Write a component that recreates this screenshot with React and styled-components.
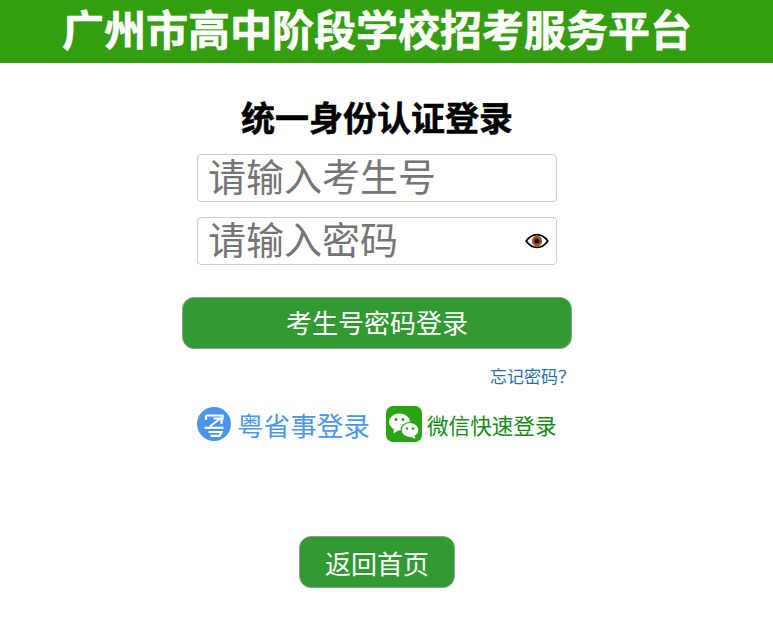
import React from "react";
import styled, { createGlobalStyle } from "styled-components";

const Global = createGlobalStyle`
  html, body { margin: 0; padding: 0; background: #fff; }
  body { font-family: "Liberation Sans", "Noto Sans CJK SC", sans-serif; }
  * { box-sizing: border-box; }
  input::placeholder { color: #757575; opacity: 1; }
`;
const Page = styled.div`
  width: 773px;
  height: 624px;
  overflow: hidden;
`;
const Header = styled.header`
  height: 63px;
  background: #339e0f;
  padding-right: 19px;
  display: flex;
  align-items: center;
  justify-content: center;
`;
const HeaderTitle = styled.h1`
  margin: 0;
  color: #fff;
  font-size: 42px;
  line-height: 63px;
  font-weight: 700;
  white-space: nowrap;
  -webkit-text-stroke: 0.6px #fff;
`;
const Main = styled.main`
  width: 754px;
  display: flex;
  flex-direction: column;
  align-items: center;
`;
const Subtitle = styled.h2`
  margin: 31px 0 0;
  font-size: 34px;
  line-height: 50px;
  font-weight: 700;
  color: #000;
  -webkit-text-stroke: 0.5px #000;
`;
const Form = styled.form`
  width: 390px;
  display: flex;
  flex-direction: column;
  align-items: center;
`;
const Field = styled.div`
  position: relative;
  width: 360px;
  height: 48px;
  margin-top: ${(p) => p.$top}px;
`;
const Input = styled.input`
  width: 100%;
  height: 100%;
  padding: 0 10px;
  border: 1px solid #ccc;
  border-radius: 4px;
  outline: none;
  background: #fff;
  font-family: inherit;
  font-size: 38px;
`;
const Eye = styled.svg`
  position: absolute;
  right: 8px;
  top: 15px;
  width: 24px;
  height: 18px;
`;
const GreenButton = styled.button`
  display: block;
  width: ${(p) => p.$w}px;
  height: 52px;
  padding: 0 0 ${(p) => p.$lift || 0}px;
  border: 1px solid #8fa08f;
  border-radius: 12px;
  background: #339933;
  color: #fff;
  font-family: inherit;
  font-size: 26px;
`;
const SubmitButton = styled(GreenButton)`
  margin-top: 32px;
`;
const BackButton = styled(GreenButton)`
  margin-top: 93px;
`;
const Forgot = styled.a`
  align-self: flex-end;
  margin-top: 19px;
  margin-right: -3px;
  font-size: 17px;
  line-height: 20px;
  font-weight: 400;
  color: #2a6fa8;
  white-space: nowrap;
`;
const QuickRow = styled.div`
  width: 360px;
  height: 38px;
  margin-top: 17px;
  display: flex;
  align-items: center;
`;
const QuickItem = styled.a`
  display: flex;
  align-items: center;
  white-space: nowrap;
  color: ${(p) => p.$color};
  font-size: ${(p) => p.$size}px;
  gap: ${(p) => p.$gap}px;
  margin-left: ${(p) => p.$left || 0}px;
`;

export default function App() {
  return (
    <Page>
      <Global />
      <Header>
        <HeaderTitle>广州市高中阶段学校招考服务平台</HeaderTitle>
      </Header>
      <Main>
        <Subtitle>统一身份认证登录</Subtitle>
        <Form onSubmit={(e) => e.preventDefault()}>
          <Field $top={10}>
            <Input placeholder="请输入考生号" />
          </Field>
          <Field $top={15}>
            <Input type="password" placeholder="请输入密码" />
            <Eye viewBox="0 0 24 18">
              <path d="M1.200 9C4.500 4.200 8 2.600 12 2.600S19.500 4.200 22.800 9C19.500 13.800 16 15.400 12 15.400S4.500 13.800 1.200 9Z" fill="#fff" stroke="#000" strokeWidth="1.700" />
              <circle cx="12" cy="9" r="5.200" fill="#a9521f" />
              <circle cx="12" cy="9" r="2.500" fill="#111" />
            </Eye>
          </Field>
          <SubmitButton $w={390} $lift={3} type="submit">考生号密码登录</SubmitButton>
          <Forgot>忘记密码？</Forgot>
          <QuickRow>
            <QuickItem $color="#4a98ee" $size={26.6} $gap={6}>
              <svg width="34" height="34" viewBox="0 0 34 34">
                <circle cx="17" cy="17" r="17" fill="#4a94ec" />
                <g fill="none" stroke="#fff" strokeWidth="2.200">
                  <path d="M9 8.500H25.500V13M9 8.500V13" />
                  <path d="M13 19.500L24 11" />
                  <path d="M16.500 11.500H24.500V17" />
                  <path d="M7.500 20.800H26.500" />
                  <path d="M11.500 25H24.500L22.500 28.800H13.500" />
                </g>
              </svg>
              粤省事登录
            </QuickItem>
            <QuickItem $color="#178a17" $size={21.6} $gap={5} $left={16}>
              <svg width="36" height="36" viewBox="0 0 36 36">
                <rect width="36" height="36" rx="7" fill="#2aa515" />
                <ellipse cx="13.500" cy="16" rx="10.500" ry="8.500" fill="#fff" />
                <path d="M8 22L7.500 27.500L13 24Z" fill="#fff" />
                <ellipse cx="24" cy="24" rx="9" ry="7.500" fill="#fff" stroke="#2aa515" strokeWidth="1.200" />
                <path d="M28 28.500L29.500 33L24.500 30.500Z" fill="#fff" />
                <circle cx="10" cy="13.500" r="1.500" fill="#2aa515" />
                <circle cx="17" cy="13.500" r="1.500" fill="#2aa515" />
                <circle cx="21" cy="22.500" r="1.300" fill="#2aa515" />
                <circle cx="27" cy="22.500" r="1.300" fill="#2aa515" />
              </svg>
              微信快速登录
            </QuickItem>
          </QuickRow>
        </Form>
        <BackButton $w={156} type="button">返回首页</BackButton>
      </Main>
    </Page>
  );
}
